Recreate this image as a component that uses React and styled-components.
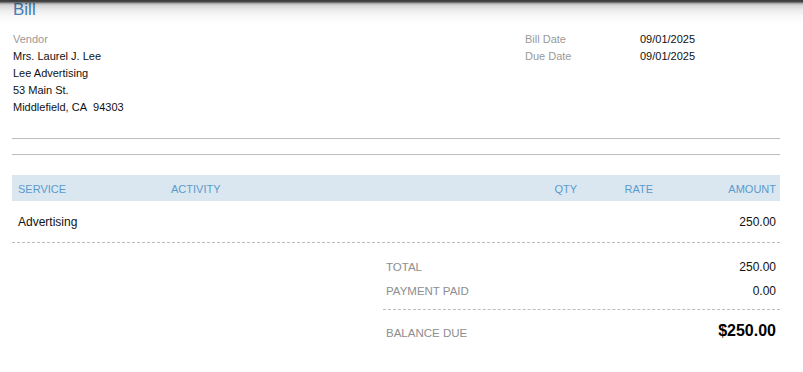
import React from "react";
import styled, { createGlobalStyle } from "styled-components";

const GlobalStyle = createGlobalStyle`
  html, body {
    margin: 0;
    padding: 0;
    background: #fff;
  }
  body {
    font-family: "Liberation Sans", Arial, sans-serif;
    color: #111;
  }
`;

const vendorLines = ["Mrs. Laurel J. Lee", "Lee Advertising", "53 Main St.", "Middlefield, CA\u00a0 94303"];

const dates = [
  { label: "Bill Date", value: "09/01/2025" },
  { label: "Due Date", value: "09/01/2025" },
];

const lines = [{ service: "Advertising", activity: "", qty: "", rate: "", amount: "250.00" }];

const App = () => {
  return (
    <Page>
      <GlobalStyle />
      <TopShade />
      <Title>Bill</Title>
      <HeaderInfo>
        <VendorBlock>
          <Label>Vendor</Label>
          {vendorLines.map((l) => (
            <Text key={l}>{l}</Text>
          ))}
        </VendorBlock>
        <DateBlock>
          {dates.map((d) => (
            <React.Fragment key={d.label}>
              <Label>{d.label}</Label>
              <Text>{d.value}</Text>
            </React.Fragment>
          ))}
        </DateBlock>
      </HeaderInfo>
      <Rule first />
      <Rule />
      <Table>
        <HeadRow>
          <HeadCell>SERVICE</HeadCell>
          <HeadCell>ACTIVITY</HeadCell>
          <HeadCell right>QTY</HeadCell>
          <HeadCell right>RATE</HeadCell>
          <HeadCell right>AMOUNT</HeadCell>
        </HeadRow>
        {lines.map((r) => (
          <BodyRow key={r.service}>
            <Cell>{r.service}</Cell>
            <Cell>{r.activity}</Cell>
            <Cell right>{r.qty}</Cell>
            <Cell right>{r.rate}</Cell>
            <Cell right>{r.amount}</Cell>
          </BodyRow>
        ))}
      </Table>
      <Totals>
        <TotalRow>
          <TotalLabel>TOTAL</TotalLabel>
          <TotalValue>250.00</TotalValue>
        </TotalRow>
        <TotalRow last>
          <TotalLabel>PAYMENT PAID</TotalLabel>
          <TotalValue>0.00</TotalValue>
        </TotalRow>
        <BalanceRow>
          <TotalLabel>BALANCE DUE</TotalLabel>
          <BalanceValue>$250.00</BalanceValue>
        </BalanceRow>
      </Totals>
    </Page>
  );
};

const Page = styled.div`
  padding: 0 23px 0 12px;
`;

const TopShade = styled.div`
  position: fixed;
  top: 0;
  left: 0;
  right: 0;
  height: 24px;
  pointer-events: none;
  mix-blend-mode: multiply;
  background: linear-gradient(
    to bottom,
    #3a3a3a 0,
    #4a4a4a 2px,
    #9a9a9a 3px,
    #d4d4d4 5px,
    #ececec 10px,
    #f8f8f8 16px,
    #ffffff 24px
  );
`;

const Title = styled.div`
  font-size: 17px;
  line-height: 20px;
  color: #4a86bf;
  padding-left: 1px;
`;

const HeaderInfo = styled.div`
  display: flex;
  justify-content: space-between;
  margin-top: 11px;
`;

const VendorBlock = styled.div`
  display: flex;
  flex-direction: column;
  padding-left: 1px;
`;

const DateBlock = styled.div`
  display: grid;
  grid-template-columns: 115px 140px;
  align-content: start;
`;

const Label = styled.div`
  font-size: 11px;
  line-height: 17px;
  color: #9a9a9a;
`;

const Text = styled.div`
  font-size: 11px;
  line-height: 17px;
  color: #111;
`;

const Rule = styled.div`
  height: 1px;
  background: #b9bdc1;
  margin-top: ${(p) => (p.first ? "22px" : "15px")};
`;

const Table = styled.div`
  margin-top: 20px;
`;

const columns = "153px 346px 70px 76px 123px";

const HeadRow = styled.div`
  display: grid;
  grid-template-columns: ${columns};
  height: 26px;
  align-items: center;
  background: #dae7f1;
`;

const HeadCell = styled.div`
  font-size: 11px;
  color: #5a9bcc;
  padding: ${(p) => (p.right ? "1px 4px 0 0" : "1px 0 0 6px")};
  text-align: ${(p) => (p.right ? "right" : "left")};
`;

const BodyRow = styled.div`
  display: grid;
  grid-template-columns: ${columns};
  height: 41px;
  align-items: center;
  border-bottom: 1px dashed #bdbdbd;
`;

const Cell = styled.div`
  font-size: 12px;
  color: #111;
  padding: ${(p) => (p.right ? "0 4px 0 0" : "0 0 0 6px")};
  text-align: ${(p) => (p.right ? "right" : "left")};
`;

const Totals = styled.div`
  margin: 12px 0 0 371px;
  display: flex;
  flex-direction: column;
`;

const TotalRow = styled.div`
  display: flex;
  justify-content: space-between;
  align-items: center;
  height: 24px;
  padding: 0 4px 0 3px;
  ${(p) =>
    p.last &&
    `
    height: 31px;
    padding-bottom: 7px;
    box-sizing: border-box;
    border-bottom: 1px dashed #bdbdbd;
  `}
`;

const BalanceRow = styled.div`
  display: flex;
  justify-content: space-between;
  align-items: center;
  height: 42px;
  padding: 4px 4px 0 3px;
  box-sizing: border-box;
`;

const TotalLabel = styled.div`
  font-size: 11.5px;
  color: #8e8e8e;
`;

const TotalValue = styled.div`
  font-size: 12px;
  color: #111;
`;

const BalanceValue = styled.div`
  font-size: 16px;
  font-weight: bold;
  color: #000;
  margin-top: -4px;
`;

export default App;
